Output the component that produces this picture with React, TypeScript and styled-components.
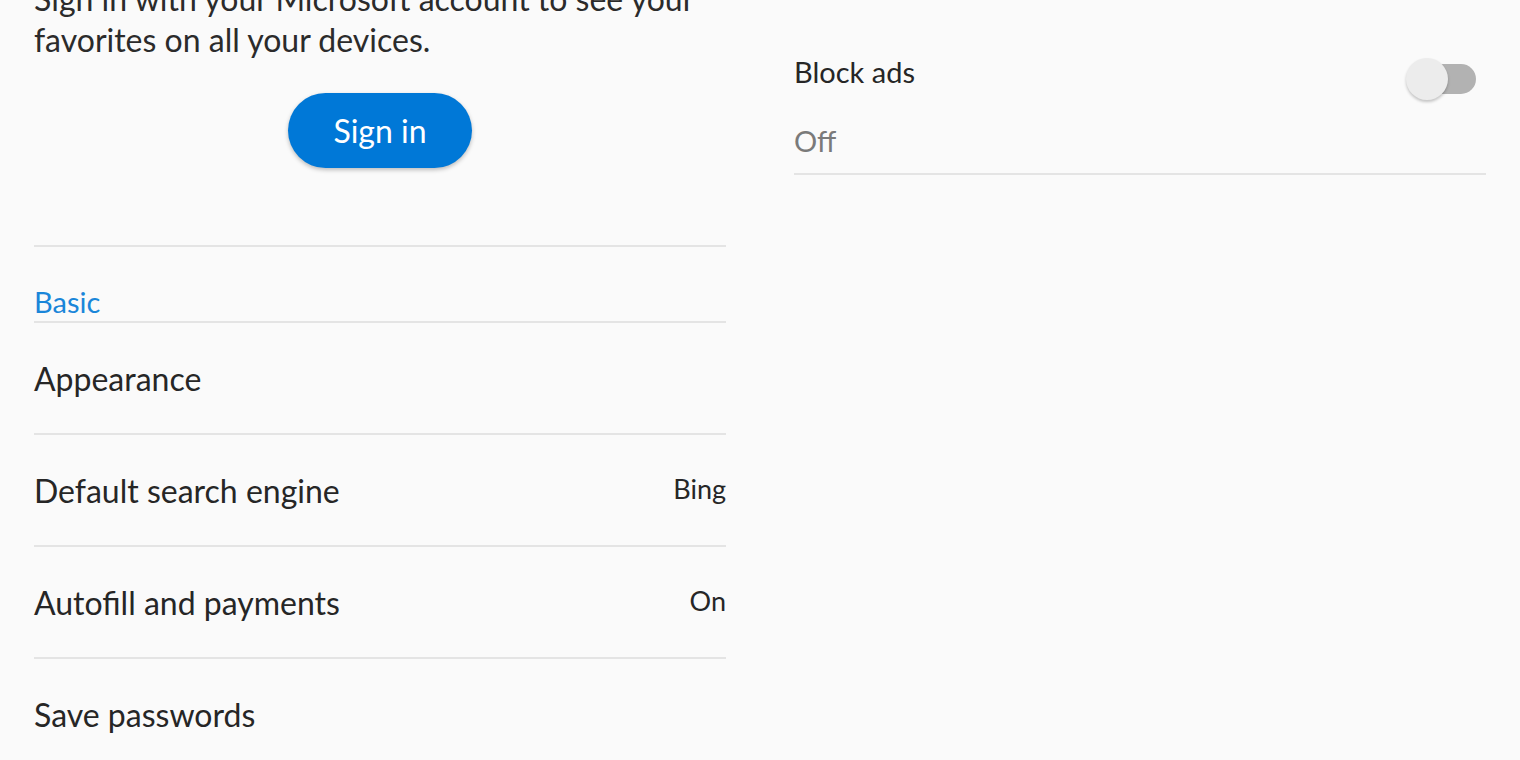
import React from 'react';
import styled, { createGlobalStyle } from 'styled-components';

const GlobalStyle = createGlobalStyle`
  html, body {
    margin: 0;
    padding: 0;
    background: #fafafa;
    overflow: hidden;
  }
  body {
    font-family: Lato, "Noto Sans", sans-serif;
    color: #262626;
  }
`;

const Page = styled.div`
  display: grid;
  grid-template-columns: 692px 692px;
  column-gap: 68px;
  padding: 0 34px;
  height: 760px;
  overflow: hidden;
`;

// the settings list is scrolled a little, so the first line is cut at the top
const LeftPane = styled.section`
  display: flex;
  flex-direction: column;
  margin-top: -22px;
`;

const Intro = styled.p`
  margin: 0;
  font-size: 32px;
  line-height: 41px;
  color: #2b2b2b;
`;

const SignInButton = styled.button`
  align-self: center;
  margin-top: 33px;
  width: 184px;
  height: 75px;
  border: 0;
  border-radius: 38px;
  background: #0078d7;
  color: #fff;
  font-family: inherit;
  font-size: 32px;
  box-shadow: 0 2px 4px rgba(0, 0, 0, 0.25);
`;

const Divider = styled.hr`
  margin: 77px 0 0;
  border: 0;
  height: 2px;
  background: #e4e4e4;
`;

const SectionTitle = styled.h3`
  margin: 0;
  padding-top: 38px;
  height: 36px;
  border-bottom: 2px solid #e4e4e4;
  font-size: 29px;
  font-weight: 400;
  line-height: 34px;
  color: #1a86d9;
`;

const Row = styled.div<{ last?: boolean }>`
  display: flex;
  align-items: center;
  justify-content: space-between;
  height: 110px;
  border-bottom: ${({ last }) => (last ? '0' : '2px solid #e4e4e4')};
`;

const RowLabel = styled.span`
  font-size: 32px;
  color: #262626;
`;

const RowValue = styled.span`
  font-size: 27px;
  color: #262626;
  margin-top: -4px;
`;

const RightPane = styled.section`
  display: flex;
  flex-direction: column;
  padding-top: 54px;
`;

const ToggleRow = styled.div`
  display: flex;
  align-items: flex-start;
  justify-content: space-between;
  padding-bottom: 14px;
  border-bottom: 2px solid #e4e4e4;
`;

const ToggleText = styled.div`
  display: flex;
  flex-direction: column;
  gap: 33px;
`;

const ToggleTitle = styled.span`
  font-size: 29px;
  line-height: 36px;
  color: #262626;
`;

const ToggleState = styled.span`
  font-size: 29px;
  line-height: 36px;
  color: #7a7a7a;
`;

const Track = styled.div`
  position: relative;
  width: 58px;
  height: 30px;
  margin-top: 10px;
  margin-right: 10px;
  border-radius: 15px;
  background: #b2b2b2;
`;

const Thumb = styled.div`
  position: absolute;
  left: -12px;
  top: -6px;
  width: 42px;
  height: 42px;
  border-radius: 50%;
  background: #ececec;
  box-shadow: 0 2px 3px rgba(0, 0, 0, 0.22);
`;

const rows = [
  { label: 'Appearance' },
  { label: 'Default search engine', value: 'Bing' },
  { label: 'Autofill and payments', value: 'On' },
  { label: 'Save passwords' },
];

export default function App() {
  return (
    <>
      <GlobalStyle />
      <Page>
        <LeftPane>
          <Intro>
            Sign in with your Microsoft account to see your
            <br />
            favorites on all your devices.
          </Intro>
          <SignInButton>Sign in</SignInButton>
          <Divider />
          <SectionTitle>Basic</SectionTitle>
          {rows.map((r, i) => (
            <Row key={r.label} last={i === rows.length - 1}>
              <RowLabel>{r.label}</RowLabel>
              {r.value && <RowValue>{r.value}</RowValue>}
            </Row>
          ))}
        </LeftPane>
        <RightPane>
          <ToggleRow>
            <ToggleText>
              <ToggleTitle>Block ads</ToggleTitle>
              <ToggleState>Off</ToggleState>
            </ToggleText>
            <Track>
              <Thumb />
            </Track>
          </ToggleRow>
        </RightPane>
      </Page>
    </>
  );
}
